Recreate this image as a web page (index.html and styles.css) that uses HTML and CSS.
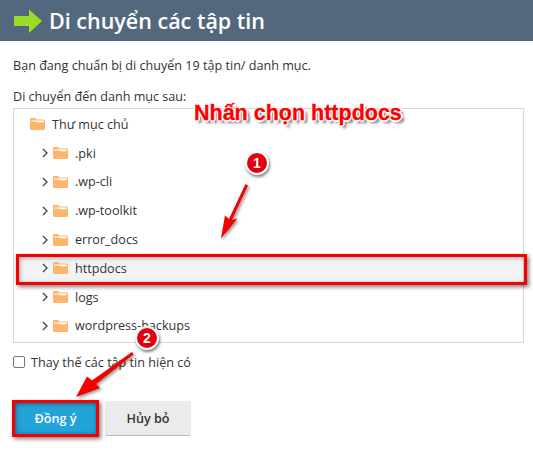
FILE: index.html
```html
<!DOCTYPE html>
<html lang="vi">
<head>
<meta charset="utf-8">
<title>Di chuyển các tập tin</title>
<link rel="stylesheet" href="styles.css">
</head>
<body>
<div class="page">
  <header class="head">
    <svg class="head-arrow" width="30" height="24" viewBox="0 0 30 24"><path d="M1 7H16V0.5L29 12L16 24V17H1Z" fill="#9bdc2b"/></svg>
    <h1>Di chuyển các tập tin</h1>
  </header>
  <main class="body">
    <p class="intro">Bạn đang chuẩn bị di chuyển 19 tập tin/ danh mục.</p>
    <p class="label">Di chuyển đến danh mục sau:</p>
    <div class="tree">
      <div class="row root">
        <svg class="folder" viewBox="0 0 15 12"><use href="#fld"/></svg><span>Thư mục chủ</span>
      </div>
      <div class="row"><svg class="chev" viewBox="0 0 6 10"><path d="M1 1l4 4-4 4" fill="none" stroke="#444" stroke-width="1.3"/></svg><svg class="folder" viewBox="0 0 15 12"><use href="#fld"/></svg><span>.pki</span></div>
      <div class="row"><svg class="chev" viewBox="0 0 6 10"><path d="M1 1l4 4-4 4" fill="none" stroke="#444" stroke-width="1.3"/></svg><svg class="folder" viewBox="0 0 15 12"><use href="#fld"/></svg><span>.wp-cli</span></div>
      <div class="row"><svg class="chev" viewBox="0 0 6 10"><path d="M1 1l4 4-4 4" fill="none" stroke="#444" stroke-width="1.3"/></svg><svg class="folder" viewBox="0 0 15 12"><use href="#fld"/></svg><span>.wp-toolkit</span></div>
      <div class="row"><svg class="chev" viewBox="0 0 6 10"><path d="M1 1l4 4-4 4" fill="none" stroke="#444" stroke-width="1.3"/></svg><svg class="folder" viewBox="0 0 15 12"><use href="#fld"/></svg><span>error_docs</span></div>
      <div class="row selected"><svg class="chev" viewBox="0 0 6 10"><path d="M1 1l4 4-4 4" fill="none" stroke="#444" stroke-width="1.3"/></svg><svg class="folder" viewBox="0 0 15 12"><use href="#fld"/></svg><span>httpdocs</span></div>
      <div class="row"><svg class="chev" viewBox="0 0 6 10"><path d="M1 1l4 4-4 4" fill="none" stroke="#444" stroke-width="1.3"/></svg><svg class="folder" viewBox="0 0 15 12"><use href="#fld"/></svg><span>logs</span></div>
      <div class="row"><svg class="chev" viewBox="0 0 6 10"><path d="M1 1l4 4-4 4" fill="none" stroke="#444" stroke-width="1.3"/></svg><svg class="folder" viewBox="0 0 15 12"><use href="#fld"/></svg><span>wordpress-backups</span></div>
    </div>
    <label class="check"><span class="box"></span><span>Thay thế các tập tin hiện có</span></label>
    <div class="actions">
      <button class="btn primary">Đồng ý</button>
      <button class="btn">Hủy bỏ</button>
    </div>
  </main>
</div>

<svg class="defs" width="0" height="0">
  <defs>
    <g id="fld">
      <path d="M0 1.2C0 .5.5 0 1.2 0H5L6.5 1.6H13.8C14.5 1.6 15 2.1 15 2.8V10.8C15 11.5 14.5 12 13.8 12H1.2C.5 12 0 11.5 0 10.8Z" fill="#fdb56b"/>
      <path d="M1.3 2.5H13.7V4.2H7L6 3.4H1.3Z" fill="#fff"/>
    </g>
    <filter id="soft" x="-30%" y="-30%" width="160%" height="160%">
      <feDropShadow dx="1.5" dy="1.5" stdDeviation="1.5" flood-color="#000" flood-opacity=".45"/>
    </filter>
  </defs>
</svg>

<div class="callout">Nhấn chọn httpdocs</div>
<div class="badge badge-1">1</div>
<div class="badge badge-2">2</div>
<div class="mark mark-row"></div>
<div class="mark mark-btn"></div>
<svg class="overlay" width="533" height="464" viewBox="0 0 533 464">
  <g filter="url(#soft)" fill="#f40000">
    <path d="M245.500 184L248 185.500L232 220L237.500 218.500L221 238.500L225 215.500L229 219Z"/>
    <path d="M132 352L133.500 354.500L96 384L100 388L76 397L87 376.500L92 380.500Z"/>
  </g>
</svg>
</body>
</html>
```
FILE: styles.css
```css
html, body { margin: 0; padding: 0; background: #fff; }
body {
  width: 533px;
  height: 464px;
  overflow: hidden;
  position: relative;
  font-family: "Open Sans", "Liberation Sans", sans-serif;
  font-size: 12.6px;
  color: #333;
}
.head {
  height: 41px;
  background: #53687c;
  display: flex;
  align-items: center;
  padding-left: 13px;
  gap: 6px;
}
.head-arrow { flex: none; }
.head h1 {
  margin: 0;
  color: #fff;
  font-size: 21.5px;
  font-weight: 600;
  line-height: 41px;
}
.body { padding: 16px 13px 0; }
.intro { margin: 0; line-height: 18px; }
.label { margin: 13px 0 0; line-height: 18px; }
.tree {
  margin-top: 2px;
  width: 511px;
  height: 235px;
  box-sizing: border-box;
  border: 1px solid #d8d8d8;
  overflow: hidden;
  padding-top: 1px;
}
.row {
  height: 28.800px;
  display: flex;
  align-items: center;
  padding-left: 28px;
  white-space: nowrap;
}
.row.root { padding-left: 16px; }
.row.selected { background: #f3f3f3; }
.chev { width: 6px; height: 10px; flex: none; margin-right: 5px; }
.folder { width: 15px; height: 12px; flex: none; margin-right: 7px; }
.check {
  display: flex;
  align-items: center;
  gap: 6px;
  margin-top: 10px;
  height: 18px;
}
.box {
  width: 10px;
  height: 10px;
  border: 1px solid #767676;
  border-radius: 2px;
  flex: none;
}
.actions { display: flex; gap: 7px; margin-top: 30px; }
.btn {
  height: 35px;
  border: 0;
  border-bottom: 1px solid #bbb;
  border-radius: 2px;
  background: #ebebeb;
  font: 600 12.6px "Open Sans", "Liberation Sans", sans-serif;
  color: #333;
  padding: 0;
  width: 86px;
}
.btn.primary {
  width: 85px;
  background: #22a3d9;
  color: #fff;
  border-bottom: 0;
  box-shadow: inset 0 0 5px rgba(0,0,0,.3);
}
.defs { position: absolute; }
.overlay { position: absolute; left: 0; top: 0; pointer-events: none; }
.callout {
  position: absolute;
  left: 194px;
  top: 100px;
  color: #f00;
  font: 700 21.5px/26px "Liberation Sans", sans-serif;
  white-space: nowrap;
  -webkit-text-stroke: 0.3px #f00;
  text-shadow: 1.5px 0 0 #fff, -1.5px 0 0 #fff, 0 1.5px 0 #fff, 0 -1.5px 0 #fff, 1px 1px 0 #fff, -1px -1px 0 #fff, 1px -1px 0 #fff, -1px 1px 0 #fff, 3px 3px 3px rgba(0,0,0,.6);
}
.badge {
  position: absolute;
  width: 20px;
  height: 20px;
  border-radius: 50%;
  border: 2px solid #fff;
  background: #e6000f;
  color: #fff;
  font: 700 14px/20px "Liberation Sans", sans-serif;
  text-align: center;
  box-shadow: 1px 2px 3px rgba(0,0,0,.5);
}
.badge-1 { left: 245px; top: 151px; }
.badge-2 { left: 135px; top: 326px; }
.mark {
  position: absolute;
  box-sizing: border-box;
  border: 3px solid #f80000;
  box-shadow: 2px 2px 4px rgba(0,0,0,.5), inset 1px 1px 4px rgba(0,0,0,.35);
}
.mark-row { left: 16px; top: 254px; width: 511px; height: 31px; }
.mark-btn { left: 12px; top: 400px; width: 87px; height: 37px; }
```
